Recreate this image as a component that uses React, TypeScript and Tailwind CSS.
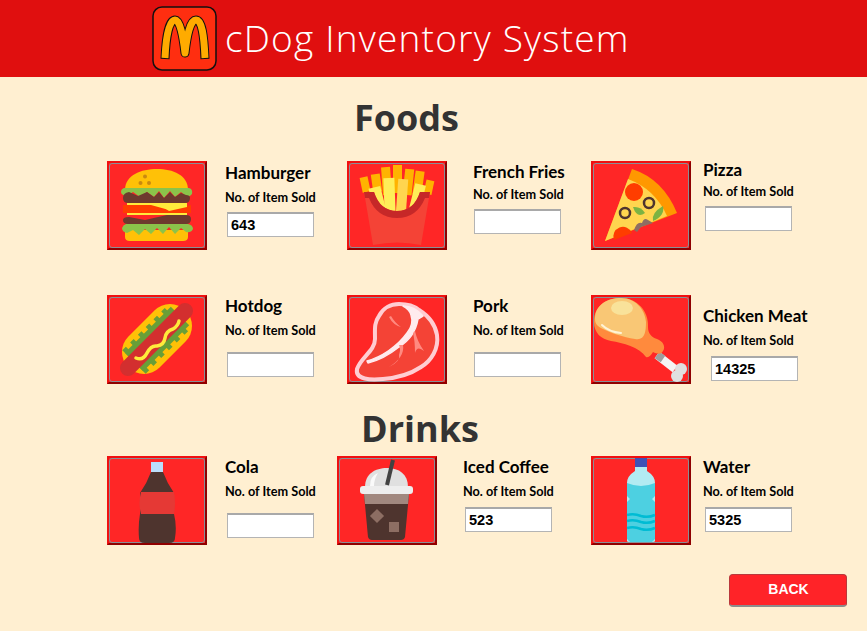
import type { ReactNode } from 'react';

type Item = {
    name: string;
    value: string;
    icon: ReactNode;
    gapClass: string;
    widthClass: string;
    titleClass: string;
    soldClass: string;
    inputClass: string;
};

const BurgerIcon = (
    <>
        <path d="M18 29C18 14 34 8 50 8C66 8 81 14 81 29Z" fill="#FFC107" />
        <circle cx="38" cy="15.500" r="2" fill="#C98A10" />
        <circle cx="33.500" cy="22" r="2" fill="#C98A10" />
        <circle cx="42" cy="22" r="2" fill="#C98A10" />
        <path d="M18 69H81V76Q81 80 76 80H23Q18 80 18 76Z" fill="#FFC107" />
        <path d="M17 27H82Q86 28 85 33Q83 36 79 35L74 31L68 36L63 30L57 37L52 30L47 36L40 31L33 36L26 31L20 35Q14 34 14 31Q14 28 17 27Z" fill="#8BC34A" />
        <path d="M22 31L31 35L40 31L47 36L52 31L57 37L63 31L68 36L74 32L79 34Q83 34 83 37Q83 42 78 42H21Q16 42 16 37Q16 32 22 31Z" fill="#6D3A2E" />
        <rect x="20" y="42" width="60" height="12" fill="#FFEB3B" />
        <path d="M16 44H44L62 49L84 44V52H16Z" fill="#FF3D00" />
        <path d="M20 42H80V46L62 50L50 42Z" fill="#FFEB3B" />
        <path d="M22 56L38 59L60 54H79Q84 54 84 58Q84 63 79 63H21Q16 63 16 59Q16 56 22 56Z" fill="#6D3A2E" />
        <path d="M19 63H81Q86 64 86 68Q84 72 79 71L74 67L68 73L62 66L56 73L50 67L44 73L38 68L32 74L26 69L20 72Q15 71 15 67Q16 64 19 63Z" fill="#8BC34A" />
    </>
);

const FriesIcon = (
    <>
        <rect x="14" y="16" width="8" height="15" fill="#FFB300" transform="rotate(-12 18 23)" />
        <rect x="25" y="13" width="9" height="18" fill="#FFB300" transform="rotate(-8 30 22)" />
        <rect x="35" y="6" width="9" height="28" fill="#FFB300" transform="rotate(-4 40 20)" />
        <rect x="46" y="4" width="9" height="28" fill="#FFB300" />
        <rect x="57" y="8" width="9" height="26" fill="#FFB300" transform="rotate(6 61 20)" />
        <rect x="67" y="10" width="9" height="24" fill="#FFB300" transform="rotate(8 71 22)" />
        <rect x="78" y="19" width="8" height="14" fill="#FFB300" transform="rotate(12 81 26)" />
        <rect x="24" y="26" width="12" height="22" fill="#FFEE58" transform="rotate(-14 30 37)" />
        <rect x="37" y="17" width="11" height="36" fill="#FFEE58" transform="rotate(-2 42 35)" />
        <rect x="50" y="18" width="10" height="36" fill="#FFD54F" transform="rotate(4 55 36)" />
        <rect x="65" y="23" width="11" height="26" fill="#FFEE58" transform="rotate(14 70 36)" />
        <path d="M17 31H27Q33 50 50 50Q67 50 73 31H83L74 84Q50 79 26 84Z" fill="#F44336" />
        <path d="M17 31H27Q33 50 50 50Q67 50 73 31H83L82 37H78Q70 57 50 57Q30 57 22 37H18Z" fill="#C62828" />
    </>
);

const PizzaIcon = (
    <>
        <path d="M14 80L41 8Q72 18 86 52Z" fill="#FF9800" />
        <path d="M14 80L37 18Q64 28 76 55Z" fill="#FFD54F" />
        <circle cx="43" cy="31" r="9" fill="#FF3D00" />
        <path d="M23 79A9.500 9.500 0 1 1 41 72Z" fill="#FF3D00" />
        <circle cx="34" cy="52" r="5" fill="none" stroke="#4E342E" strokeWidth="2.500" />
        <circle cx="58" cy="42" r="5" fill="none" stroke="#4E342E" strokeWidth="2.500" />
        <path d="M42 46Q50 45 54 52Q46 58 42 46Z" fill="#7CB342" />
        <path d="M62 60Q60 52 72 45Q74 55 62 60Z" fill="#7CB342" />
        <path d="M43 69Q46 60 51 62Q53 56 57 59L62 62L50 66L46 71Z" fill="#8D6E63" />
    </>
);

const HotdogIcon = (
    <>
        <line x1="37" y1="57" x2="63" y2="31" stroke="#FFC107" strokeWidth="44" strokeLinecap="round" />
        <line x1="27" y1="67" x2="73" y2="21" stroke="#689F38" strokeWidth="26" />
        <line x1="27" y1="67" x2="73" y2="21" stroke="#689F38" strokeWidth="33" strokeDasharray="5 6" />
        <line x1="21" y1="73" x2="78" y2="16" stroke="#D32F2F" strokeWidth="16" strokeLinecap="round" />
        <path d="M29 63Q36 66 40 58Q44 50 50 51Q57 50 58 43Q59 36 66 34Q71 31 72 26" fill="none" stroke="#FFEB3B" strokeWidth="3.500" strokeLinecap="round" />
    </>
);

const MeatIcon = (
    <>
        <path d="M10 74C14 62 28 56 28 44C28 34 27 28 32 21C36 13 44 9 52 9C60 9 66 10 72 15C80 20 88 28 90 40C92 54 84 66 74 72C62 80 50 83 36 84C24 85 8 85 10 74Z" fill="#F44336" stroke="#FFCDD2" strokeWidth="4" />
        <path d="M20 66C34 62 50 52 60 38C65 32 66 26 64 20C63 16 60 13 56 11C64 11 70 14 76 21L71 24C69 36 62 46 52 52C42 60 30 66 21 68Z" fill="#FFEBEE" stroke="#FFEBEE" strokeWidth="1.500" strokeLinejoin="round" />
        <path d="M44 21Q48 28 54 32Q46 30 42 22Z" fill="#FF8A80" />
        <path d="M56 50Q58 62 42 72Q54 66 52 60Q54 54 52 50Z" fill="#FF8A80" />
        <path d="M68 36Q70 46 77 56Q70 50 68 58Q68 46 66 38Z" fill="#FF8A80" />
    </>
);

const ChickenIcon = (
    <>
        <line x1="66" y1="60" x2="84" y2="74" stroke="#F5F5F5" strokeWidth="8" />
        <line x1="66" y1="60" x2="72" y2="64" stroke="#9E9E9E" strokeWidth="8" />
        <circle cx="90" cy="74" r="6" fill="#E0E0E0" />
        <circle cx="86" cy="81" r="6" fill="#E0E0E0" />
        <path d="M3 27C3 10 16 3 30 3C46 3 58 16 57 32C57 38 60 42 66 44C72 46 75 52 72 56C70 60 66 59 62 57C60 60 58 63 55 62C48 52 32 48 20 46C10 44 3 38 3 27Z" fill="#FF8A3D" />
        <path d="M4 24C4 10 16 3 30 3C44 3 54 14 55 27C55 36 54 46 44 44C32 42 20 38 12 34C8 32 4 30 4 24Z" fill="#F9C775" />
        <ellipse cx="31" cy="13" rx="11" ry="7" fill="#F9E29A" />
        <path d="M11 30Q18 37 30 38" fill="none" stroke="#FFF3D6" strokeWidth="2" strokeLinecap="round" />
    </>
);

const ColaIcon = (
    <>
        <rect x="44" y="6" width="12" height="10" fill="#BBDEFB" />
        <path d="M44 16H56Q60 27 67 37V58Q70 70 68 82Q68 87 62 87H38Q32 87 32 82Q31 70 33 58V37Q40 27 44 16Z" fill="#4E342E" />
        <path d="M34 36H67Q69 47 67 58H34Q31 47 34 36Z" fill="#E53935" />
    </>
);

const CoffeeIcon = (
    <>
        <path d="M27 38H72L68 81Q67 84 64 84H35Q32 84 31 81Z" fill="#4E342E" />
        <path d="M27 38H72L71 48H28Z" fill="#A1887F" />
        <path d="M28 31C28 18 38 12 50 12C62 12 71 18 71 31Z" fill="#E0E0E0" />
        <path d="M33 30Q33 20 41 17Q37 23 37 30Z" fill="#FAFAFA" />
        <line x1="56" y1="4" x2="50" y2="29" stroke="#424242" strokeWidth="4" />
        <rect x="23" y="30" width="53" height="8" rx="3" fill="#EEEEEE" />
        <rect x="35" y="55" width="10" height="10" fill="#8D6E63" transform="rotate(45 40 60)" />
        <rect x="52" y="66" width="10" height="10" fill="#8D6E63" />
    </>
);

const WaterIcon = (
    <>
        <rect x="44" y="2" width="12" height="10" fill="#3F51B5" />
        <path d="M44 11H56V15Q64 20 64 27V85Q64 86 60 86H40Q36 86 36 85V27Q36 20 44 15Z" fill="#B2EBF2" />
        <path d="M36 27Q50 33 64 27V40L61 43L64 46V83L61 86H39L36 83V46L39 43L36 40Z" fill="#4DD0E1" />
        <path d="M36 59Q43 57 50 60Q57 62 64 59" fill="none" stroke="#00BCD4" strokeWidth="2.500" />
        <path d="M36 65Q43 63 50 66Q57 68 64 65" fill="none" stroke="#00BCD4" strokeWidth="2.500" />
        <path d="M36 72Q43 70 50 73Q57 75 64 72" fill="none" stroke="#00BCD4" strokeWidth="2.500" />
    </>
);

const rowOne: Item[] = [
    { name: 'Hamburger', value: '643', icon: BurgerIcon, gapClass: 'gap-[18px]', widthClass: 'w-[240px]', titleClass: 'mt-[1px]', soldClass: 'mt-[5px]', inputClass: 'mt-[7px] ml-[2px]' },
    { name: 'French Fries', value: '', icon: FriesIcon, gapClass: 'gap-[26px]', widthClass: 'w-[244px]', titleClass: 'mt-0', soldClass: 'mt-[3px]', inputClass: 'mt-[7px] ml-[1px]' },
    { name: 'Pizza', value: '', icon: PizzaIcon, gapClass: 'gap-[12px]', widthClass: 'w-[220px]', titleClass: 'mt-[-2px]', soldClass: 'mt-[2px]', inputClass: 'mt-[7px] ml-[2px]' },
];

const rowTwo: Item[] = [
    { name: 'Hotdog', value: '', icon: HotdogIcon, gapClass: 'gap-[18px]', widthClass: 'w-[240px]', titleClass: 'mt-0', soldClass: 'mt-[5px]', inputClass: 'mt-[14px] ml-[2px]' },
    { name: 'Pork', value: '', icon: MeatIcon, gapClass: 'gap-[26px]', widthClass: 'w-[244px]', titleClass: 'mt-0', soldClass: 'mt-[5px]', inputClass: 'mt-[14px] ml-[1px]' },
    { name: 'Chicken Meat', value: '14325', icon: ChickenIcon, gapClass: 'gap-[12px]', widthClass: 'w-[240px]', titleClass: 'mt-[10px]', soldClass: 'mt-[5px]', inputClass: 'mt-[8px] ml-[8px]' },
];

const rowThree: Item[] = [
    { name: 'Cola', value: '', icon: ColaIcon, gapClass: 'gap-[18px]', widthClass: 'w-[230px]', titleClass: 'mt-0', soldClass: 'mt-[5px]', inputClass: 'mt-[14px] ml-[2px]' },
    { name: 'Iced Coffee', value: '523', icon: CoffeeIcon, gapClass: 'gap-[26px]', widthClass: 'w-[254px]', titleClass: 'mt-0', soldClass: 'mt-[5px]', inputClass: 'mt-[8px] ml-[2px]' },
    { name: 'Water', value: '5325', icon: WaterIcon, gapClass: 'gap-[12px]', widthClass: 'w-[220px]', titleClass: 'mt-0', soldClass: 'mt-[5px]', inputClass: 'mt-[8px] ml-[2px]' },
];

function ItemCard({ item }: { item: Item }) {
    return (
        <div className={`flex ${item.gapClass} ${item.widthClass}`}>
            <div className="w-[100px] h-[89px] shrink-0 border-2 border-t-[#f01010] border-l-[#f01010] border-b-[#8f0000] border-r-[#8f0000] bg-[#ff2626]">
                <div className="w-full h-full border border-[#8a8f96] rounded-[3px]">
                    <svg width="94" height="83" viewBox="3 3 94 83" className="block overflow-visible">
                        {item.icon}
                    </svg>
                </div>
            </div>
            <div className="flex flex-col items-start font-['Lato',sans-serif] text-black">
                <div className={`text-[17px] leading-[22px] font-bold whitespace-nowrap ${item.titleClass}`}>{item.name}</div>
                <div className={`text-[12.700px] leading-[16px] font-bold whitespace-nowrap ${item.soldClass}`}>No. of Item Sold</div>
                <input
                    readOnly
                    value={item.value}
                    className={`w-[87px] h-[25px] shrink-0 bg-white border border-[#b4b4b4] border-t-2 border-t-[#a9a9a9] px-[3px] text-[14.500px] font-bold font-['Liberation_Sans',sans-serif] text-black outline-none ${item.inputClass}`}
                />
            </div>
        </div>
    );
}

export default function App() {
    return (
        <div className="min-h-screen bg-[#ffefd1] flex flex-col">
            <header className="h-[77px] bg-[#e00f0f] flex items-center pl-[152px] gap-[8px]">
                <svg width="65" height="65" viewBox="0 0 65 65">
                    <rect x="1" y="1" width="63" height="63" rx="9" fill="#ff2e10" stroke="#111" strokeWidth="1.500" />
                    <path d="M13 53C14 30 17 14 23 14C28 14 31 30 33 47C35 30 38 14 44 14C50 14 52 30 53 53" fill="none" stroke="#111" strokeWidth="9" strokeLinejoin="round" />
                    <path d="M13 52C14 30 17 14 23 14C28 14 31 30 33 47C35 30 38 14 44 14C50 14 52 30 53 52" fill="none" stroke="#ffab00" strokeWidth="7" strokeLinejoin="round" />
                </svg>
                <h1 className="font-['Open_Sans',sans-serif] font-light text-[37px] leading-none text-white whitespace-nowrap tracking-[1.200px] -mt-[3px]">cDog Inventory System</h1>
            </header>

            <h2 className="mt-[20px] ml-[354px] font-['Open_Sans',sans-serif] font-bold text-[36px] leading-[42px] text-[#333]">Foods</h2>

            <div className="mt-[22px] pl-[107px] flex">
                {rowOne.map((item) => (
                    <ItemCard key={item.name} item={item} />
                ))}
            </div>

            <div className="mt-[45px] pl-[107px] flex">
                {rowTwo.map((item) => (
                    <ItemCard key={item.name} item={item} />
                ))}
            </div>

            <h2 className="mt-[24px] ml-[361px] font-['Open_Sans',sans-serif] font-bold text-[36px] leading-[42px] text-[#333]">Drinks</h2>

            <div className="mt-[6px] pl-[107px] flex">
                {rowThree.map((item) => (
                    <ItemCard key={item.name} item={item} />
                ))}
            </div>

            <div className="mt-[29px] ml-[729px]">
                <button className="w-[118px] h-[33px] bg-[#ff2328] rounded-[4px] border border-[#b9393c] border-b-2 border-b-[#8c8c8c] text-white text-[14px] font-bold font-['Liberation_Sans',sans-serif] pb-[1px] pl-[1px]">
                    BACK
                </button>
            </div>
        </div>
    );
}
